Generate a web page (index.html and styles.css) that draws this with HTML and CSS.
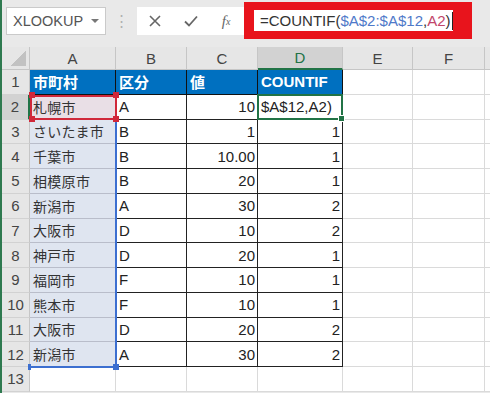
FILE: index.html
```html
<!DOCTYPE html>
<html lang="ja">
<head>
    <meta charset="UTF-8">
    <meta name="viewport" content="width=device-width, initial-scale=1.0">
    <title>COUNTIF</title>
    <link rel="stylesheet" href="styles.css">
</head>
<body>
<div class="app">
    <div class="toolbar">
        <div class="namebox"><span>XLOOKUP</span><span class="arrow"></span></div>
        <div class="dots">&#8942;</div>
        <div class="fbuttons">
            <span class="fbtn">
                <svg width="12" height="12" viewBox="0 0 12 12"><path d="M1 1 L11 11 M11 1 L1 11" stroke="#666" stroke-width="1.6" fill="none"/></svg>
            </span>
            <span class="fbtn">
                <svg width="14" height="12" viewBox="0 0 14 12"><path d="M1 6.5 L5 10.5 L13 1.5" stroke="#666" stroke-width="1.8" fill="none"/></svg>
            </span>
            <span class="fbtn fx">f<sub>x</sub></span>
        </div>
        <div class="formula">
            <span>=COUNTIF(</span><span class="ref-blue">$A$2:$A$12</span><span>,</span><span class="ref-red">A2</span><span>)</span><span class="caret"></span>
        </div>
    </div>

    <div class="sheet">
        <div class="corner"></div>
        <div class="head">A</div>
        <div class="head">B</div>
        <div class="head">C</div>
        <div class="head head-sel">D</div>
        <div class="head">E</div>
        <div class="head">F</div>
        <div class="head"></div>

        <div class="rowhead">1</div>
        <div class="cell title">市町村</div>
        <div class="cell title">区分</div>
        <div class="cell title">値</div>
        <div class="cell title">COUNTIF</div>
        <div class="cell"></div><div class="cell"></div><div class="cell"></div>

        <div class="rowhead rowhead-sel">2</div>
        <div class="cell city city-sel">札幌市</div>
        <div class="cell tb">A</div>
        <div class="cell tb num">10</div>
        <div class="cell tb">$A$12,A2)</div>
        <div class="cell"></div><div class="cell"></div><div class="cell"></div>

        <div class="rowhead">3</div>
        <div class="cell city">さいたま市</div>
        <div class="cell tb">B</div>
        <div class="cell tb num">1</div>
        <div class="cell tb num">1</div>
        <div class="cell"></div><div class="cell"></div><div class="cell"></div>

        <div class="rowhead">4</div>
        <div class="cell city">千葉市</div>
        <div class="cell tb">B</div>
        <div class="cell tb num">10.00</div>
        <div class="cell tb num">1</div>
        <div class="cell"></div><div class="cell"></div><div class="cell"></div>

        <div class="rowhead">5</div>
        <div class="cell city">相模原市</div>
        <div class="cell tb">B</div>
        <div class="cell tb num">20</div>
        <div class="cell tb num">1</div>
        <div class="cell"></div><div class="cell"></div><div class="cell"></div>

        <div class="rowhead">6</div>
        <div class="cell city">新潟市</div>
        <div class="cell tb">A</div>
        <div class="cell tb num">30</div>
        <div class="cell tb num">2</div>
        <div class="cell"></div><div class="cell"></div><div class="cell"></div>

        <div class="rowhead">7</div>
        <div class="cell city">大阪市</div>
        <div class="cell tb">D</div>
        <div class="cell tb num">10</div>
        <div class="cell tb num">2</div>
        <div class="cell"></div><div class="cell"></div><div class="cell"></div>

        <div class="rowhead">8</div>
        <div class="cell city">神戸市</div>
        <div class="cell tb">D</div>
        <div class="cell tb num">20</div>
        <div class="cell tb num">1</div>
        <div class="cell"></div><div class="cell"></div><div class="cell"></div>

        <div class="rowhead">9</div>
        <div class="cell city">福岡市</div>
        <div class="cell tb">F</div>
        <div class="cell tb num">10</div>
        <div class="cell tb num">1</div>
        <div class="cell"></div><div class="cell"></div><div class="cell"></div>

        <div class="rowhead">10</div>
        <div class="cell city">熊本市</div>
        <div class="cell tb">F</div>
        <div class="cell tb num">10</div>
        <div class="cell tb num">1</div>
        <div class="cell"></div><div class="cell"></div><div class="cell"></div>

        <div class="rowhead">11</div>
        <div class="cell city">大阪市</div>
        <div class="cell tb">D</div>
        <div class="cell tb num">20</div>
        <div class="cell tb num">2</div>
        <div class="cell"></div><div class="cell"></div><div class="cell"></div>

        <div class="rowhead">12</div>
        <div class="cell city">新潟市</div>
        <div class="cell tb">A</div>
        <div class="cell tb num">30</div>
        <div class="cell tb num">2</div>
        <div class="cell"></div><div class="cell"></div><div class="cell"></div>

        <div class="rowhead">13</div>
        <div class="cell"></div><div class="cell"></div><div class="cell"></div>
        <div class="cell"></div><div class="cell"></div><div class="cell"></div><div class="cell"></div>

        <!-- selection overlays -->
        <div class="range-blue"></div>
        <div class="range-red"></div>
        <div class="active"></div>
    </div>
</div>
</body>
</html>
```

FILE: styles.css
```css
body {
    margin: 0;
    background-color: #e9e9e9;
    font-family: "Liberation Sans", "Noto Sans CJK JP", sans-serif;
    overflow: hidden;
}
.app {
    border-left: 2px solid #2f7a50;
    height: 393px;
}

/* barre du haut */
.toolbar {
    height: 47px;
    box-sizing: border-box;
    display: flex;
    align-items: flex-start;
    padding: 7px 0 0 4px;
}
.namebox {
    width: 100px;
    height: 28px;
    box-sizing: border-box;
    background-color: #fff;
    border: 1px solid #cacaca;
    display: flex;
    align-items: center;
    justify-content: space-between;
    padding: 0 6px 0 6px;
    font-size: 14.5px;
    color: #555;
}
.arrow {
    width: 0;
    height: 0;
    border-left: 4px solid transparent;
    border-right: 4px solid transparent;
    border-top: 4px solid #777;
}
.dots {
    width: 31px;
    text-align: center;
    color: #b0b0b0;
    font-size: 15px;
    line-height: 28px;
}
.fbuttons {
    width: 107px;
    height: 28px;
    background-color: #fff;
    display: flex;
    align-items: center;
}
.fbtn {
    width: 36px;
    display: flex;
    justify-content: center;
    align-items: center;
}
.fx {
    font-family: "Liberation Serif", serif;
    font-style: italic;
    font-size: 15px;
    color: #666;
}
.fx sub {
    font-size: 10px;
}
.formula {
    margin-top: -5px;
    width: 228px;
    height: 37px;
    box-sizing: border-box;
    border: 8px solid #e8141c;
    border-left-width: 10px;
    border-right-width: 19px;
    background-color: #fff;
    display: flex;
    align-items: center;
    padding-left: 6px;
    font-size: 15px;
    color: #333;
    white-space: nowrap;
}
.ref-blue {
    color: #4f79c9;
}
.ref-red {
    color: #c2456a;
}
.caret {
    width: 0;
    height: 18px;
    border-left: 1px solid #222;
    margin-left: 1px;
}

/* feuille */
.sheet {
    display: grid;
    grid-template-columns: 28px 86px 71px 71px 85px 70px 72px 1fr;
    grid-template-rows: 23px repeat(13, 24.75px);
    background-color: #fff;
    position: relative;
}
.sheet > div {
    box-sizing: border-box;
}
.corner {
    background-color: #e6e6e6;
    border-right: 1px solid #c6c6c6;
    border-bottom: 1px solid #c6c6c6;
    position: relative;
}
.corner::after {
    content: "";
    position: absolute;
    right: 3px;
    bottom: 3px;
    width: 16px;
    height: 16px;
    background: linear-gradient(135deg, transparent 50%, #c2c2c2 50%);
}
.head, .rowhead {
    background-color: #e6e6e6;
    color: #444;
    font-size: 15px;
    display: flex;
    align-items: center;
    justify-content: center;
    border-right: 1px solid #c6c6c6;
    border-bottom: 1px solid #c6c6c6;
}
.rowhead {
    border-bottom-color: #d2d2d2;
}
.head-sel {
    background-color: #d2d2d2;
    color: #217346;
    border-bottom: 2px solid #217346;
}
.rowhead-sel {
    background-color: #d2d2d2;
    border-right: 2px solid #217346;
}
.cell {
    border-right: 1px solid #dadada;
    border-bottom: 1px solid #dadada;
    font-size: 15px;
    color: #222;
    padding: 0 2px 0 3px;
    display: flex;
    align-items: center;
    white-space: nowrap;
    overflow: hidden;
}
.num {
    justify-content: flex-end;
}
.title {
    background-color: #0070c0;
    color: #fff;
    font-weight: bold;
    border-right-color: #111;
    border-bottom-color: #111;
}
.tb {
    border-right-color: #222;
    border-bottom-color: #222;
}
.city {
    background-color: #dfe5f0;
    color: #333;
    font-size: 14px;
    letter-spacing: 0.3px;
    border-right-color: #555;
    border-bottom-color: #b9bdca;
}
.city-sel {
    background-color: #e9dfe6;
}

/* sélections par-dessus la grille */
.range-blue, .range-red, .active {
    position: absolute;
    inset: 0;
    pointer-events: none;
}
.range-blue {
    grid-column: 2 / 3;
    grid-row: 3 / 14;
    border-right: 2px solid #3c6fd0;
    border-bottom: 2px solid #3c6fd0;
    margin: 0 -1px -1px 0;
}
.range-blue::before, .range-blue::after {
    content: "";
    position: absolute;
    bottom: -4px;
    width: 6px;
    height: 6px;
    background-color: #3c6fd0;
}
.range-blue::before {
    left: -2px;
    width: 3px;
}
.range-blue::after {
    right: -4px;
}
.range-red {
    grid-column: 2 / 3;
    grid-row: 3 / 4;
    border: 2px solid #d0283a;
    margin: 0 -1px 0 0;
}
.range-red::before, .range-red::after {
    content: "";
    position: absolute;
    bottom: -4px;
    width: 6px;
    height: 6px;
    background-color: #d0283a;
    box-shadow: 0 -24px 0 #d0283a;
}
.range-red::before {
    left: -3px;
}
.range-red::after {
    right: -4px;
}
.active {
    grid-column: 5 / 6;
    grid-row: 3 / 4;
    border: 2px solid #217346;
    margin: -1px 0 0 -1px;
}
.active::after {
    content: "";
    position: absolute;
    right: -4px;
    bottom: -4px;
    width: 5px;
    height: 5px;
    background-color: #217346;
    border: 1px solid #fff;
}
```
